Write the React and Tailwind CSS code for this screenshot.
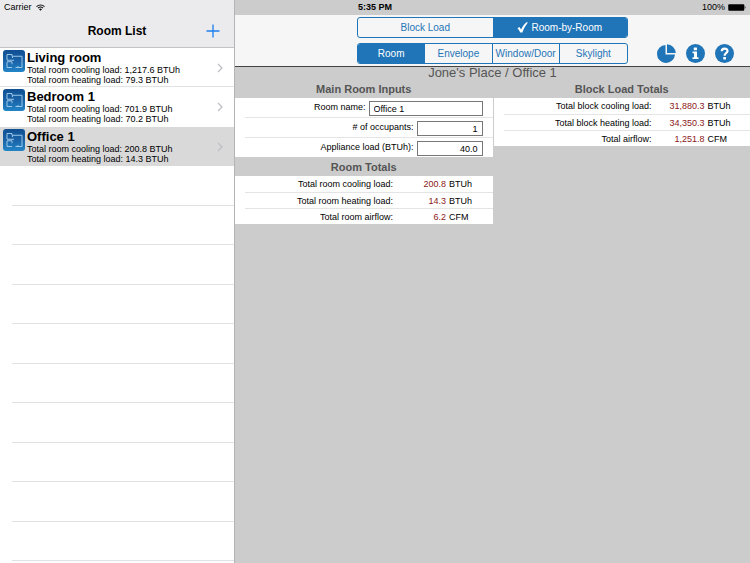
import { useState } from "react";

const rooms = [
  { name: "Living room", cooling: "1,217.6", heating: "79.3" },
  { name: "Bedroom 1", cooling: "701.9", heating: "70.2" },
  { name: "Office 1", cooling: "200.8", heating: "14.3" },
];

const roomTotals = [
  { label: "Total room cooling load:", value: "200.8", unit: "BTUh" },
  { label: "Total room heating load:", value: "14.3", unit: "BTUh" },
  { label: "Total room airflow:", value: "6.2", unit: "CFM" },
];

const blockTotals = [
  { label: "Total block cooling load:", value: "31,880.3", unit: "BTUh" },
  { label: "Total block heating load:", value: "34,350.3", unit: "BTUh" },
  { label: "Total airflow:", value: "1,251.8", unit: "CFM" },
];

const tabs = ["Room", "Envelope", "Window/Door", "Skylight"];

function WifiIcon() {
  return (
    <svg viewBox="0 0 18 14" className="w-[9px] h-[7px]" fill="none" stroke="#111" strokeWidth="2.2">
      <path d="M1 5.2a11.5 11.5 0 0 1 16 0" />
      <path d="M4 8.4a7.2 7.2 0 0 1 10 0" />
      <path d="M9 13.6 6 10.6a4.3 4.3 0 0 1 6 0z" fill="#111" stroke="none" />
    </svg>
  );
}

function BatteryIcon() {
  return (
    <svg viewBox="0 0 36 14" className="w-[18px] h-[7px]">
      <rect x="0.5" y="0.5" width="32" height="13" rx="2" fill="#000" />
      <path d="M33.5 4.5c2 .4 2 4.6 0 5z" fill="#000" />
    </svg>
  );
}

function PieIcon() {
  return (
    <svg viewBox="0 0 38 38" className="size-[19px]" fill="#1f75b8">
      <path d="M17 2v19H36A18 18 0 1 1 17 2z" />
      <path d="M20 0.5A18 18 0 0 1 37.5 18H20z" />
    </svg>
  );
}

function InfoIcon() {
  return (
    <svg viewBox="0 0 38 38" className="size-[19px]" fill="#fff">
      <circle cx="19" cy="19" r="19" fill="#1f75b8" />
      <rect x="15.5" y="7" width="6.500" height="5.500" rx="1" />
      <path d="M13 15h9v11.500h3V30H13v-3.500h3V18.500h-3z" />
    </svg>
  );
}

function HelpIcon() {
  return (
    <svg viewBox="0 0 38 38" className="size-[19px]">
      <circle cx="19" cy="19" r="19" fill="#1f75b8" />
      <path d="M13.500 14.500c0-7 11.500-7 11.500-.5 0 4.500-5.800 4.500-5.800 9.500" fill="none" stroke="#fff" strokeWidth="4.500" />
      <rect x="16.500" y="26" width="5.500" height="5" rx="1" fill="#fff" />
    </svg>
  );
}

function CheckIcon() {
  return (
    <svg viewBox="0 0 24 24" className="size-[11px]" fill="currentColor">
      <path d="M1 13.500 5.300 10.800 9 16.200C12 9.500 16 4 21.500 0L23.500 1.500C18.500 7.500 14.500 14.500 11.800 23H7.200C5.500 19.500 3.500 16.200 1 13.500z" />
    </svg>
  );
}

function BlueprintIcon() {
  return (
    <svg viewBox="0 0 44 44" className="size-[22px] shrink-0">
      <defs>
        <linearGradient id="plan" x1="0" y1="0" x2="0" y2="1">
          <stop offset="0" stopColor="#0f4f92" />
          <stop offset="0.5" stopColor="#1a62a8" />
          <stop offset="1" stopColor="#2385c6" />
        </linearGradient>
      </defs>
      <rect width="44" height="44" rx="6" fill="url(#plan)" />
      <g fill="none" stroke="#a9d2ee" strokeWidth="1.8">
        <path d="M8 20V9h10v3.500h20V35H25M18 35H8V24" />
        <path d="M8 20.500h14M19 13v3M8 23.500h10v5M30 35v-3" />
      </g>
    </svg>
  );
}

function TotalsTable({ rows }) {
  return (
    <div className="bg-white pl-[10px]">
      <table className="w-full border-collapse text-[9px] leading-[14px]">
        <tbody className="divide-y divide-[#e4e4e4]">
          {rows.map(({ label, value, unit }) => (
            <tr key={label} className="h-4">
              <th scope="row" className="w-[148px] p-0 pt-px font-normal text-right">{label}</th>
              <td className="w-[53px] p-0 pt-px text-right text-[#8c1820]">{value}</td>
              <td className="p-0 pt-px pl-[3px]">{unit}</td>
            </tr>
          ))}
        </tbody>
      </table>
    </div>
  );
}

function SectionTitle({ children }) {
  return <h2 className="h-[19px] pt-px text-center text-[11px] leading-[18px] font-bold text-[#555]">{children}</h2>;
}

function InputRow({ id, label, value, onChange, wide }) {
  return (
    <div className="h-5 last:h-[19px] pt-px flex items-center justify-end gap-[3px] pr-[10px] border-b border-[#e4e4e4] last:border-b-0">
      <label htmlFor={id} className="text-[9px]">{label}</label>
      <input
        id={id}
        value={value}
        onChange={(e) => onChange(e.target.value)}
        className={`h-[15px] border border-[#777] bg-white px-1 pt-px text-[9px] outline-none ${
          wide ? "w-[114px]" : "w-[66px] text-right"
        }`}
      />
    </div>
  );
}

export default function App() {
  const [selected, setSelected] = useState(2);
  const [mode, setMode] = useState("room");
  const [tab, setTab] = useState("Room");
  const [name, setName] = useState("Office 1");
  const [occupants, setOccupants] = useState("1");
  const [appliance, setAppliance] = useState("40.0");

  return (
    <div className="h-screen flex flex-col overflow-hidden bg-[#ccc] text-black font-['Liberation_Sans',Arial,sans-serif]">

      {/* STATUS BAR */}
      <div className="h-[15px] shrink-0 grid grid-cols-3 items-center px-1 text-[9px] bg-[linear-gradient(to_right,#ebebed_234px,#b4b4b6_234px,#b4b4b6_235px,#ccc_235px)]">
        <div className="flex items-center gap-1">Carrier <WifiIcon /></div>
        <div className="text-center font-bold">5:35 PM</div>
        <div className="flex items-center justify-end gap-[3px]">100% <BatteryIcon /></div>
      </div>

      <div className="flex flex-1 min-h-0">

        {/* ROOM LIST */}
        <aside className="w-[235px] shrink-0 flex flex-col overflow-hidden bg-white border-r border-[#b4b4b6]">
          <header className="h-[33px] shrink-0 grid grid-cols-[1fr_auto_1fr] items-center bg-[#ebebed] border-b border-[#c4c4c6]">
            <h1 className="col-start-2 text-[12px] font-bold">Room List</h1>
            <button aria-label="Add room" className="justify-self-end pr-[14px]">
              <svg viewBox="0 0 14 14" className="size-[14px]" stroke="#1c7ff0" strokeWidth="1.300">
                <path d="M7 0.500v13M0.500 7h13" />
              </svg>
            </button>
          </header>
          <ul>
            {rooms.map((room, i) => (
              <li key={room.name} className={`h-[39px] even:h-10 ${i === selected ? "bg-[#d9d9d9]" : i === 0 ? "bg-[linear-gradient(to_top,#e2e2e4_1px,transparent_1px)]" : ""}`}>
                <button onClick={() => setSelected(i)} className="w-full h-full flex items-start pl-[3px] text-left">
                  <span className="pt-[2px]"><BlueprintIcon /></span>
                  <span className="flex-1 pl-[2px] pt-[2px] flex flex-col text-[9px] leading-[10px]">
                    <span className="text-[13px] leading-[15px] font-bold">{room.name}</span>
                    <span>Total room cooling load: {room.cooling} BTUh</span>
                    <span>Total room heating load: {room.heating} BTUh</span>
                  </span>
                  <svg viewBox="0 0 6 10" className="w-[6px] h-[10px] self-center mr-[11px]" fill="none" stroke="#c0c0c4" strokeWidth="1.300">
                    <path d="M1 1l4 4-4 4" />
                  </svg>
                </button>
              </li>
            ))}
            {Array.from({ length: 12 }, (_, i) => (
              <li key={i} aria-hidden="true" className="h-[39px] even:h-10 ml-3 border-b border-[#e2e2e4]" />
            ))}
          </ul>
        </aside>

        {/* ROOM DETAILS */}
        <main className="flex-1 min-w-0">
          <div className="h-[52px] grid grid-cols-[1fr_271px_1fr] bg-[#f6f6f6] border-b border-[#444] text-[10px] text-[#1f75b8]">
            <div className="col-start-2 pt-[2px] flex flex-col gap-[5px]">
              <div className="h-[21px] grid grid-cols-2 rounded-[3px] border border-[#1f75b8] overflow-hidden">
                <button onClick={() => setMode("block")} className={mode === "block" ? "bg-[#1f75b8] text-white" : ""}>
                  Block Load
                </button>
                <button
                  onClick={() => setMode("room")}
                  className={`flex items-center justify-center gap-[3px] ${mode === "room" ? "bg-[#1f75b8] text-white" : ""}`}
                >
                  <CheckIcon /> Room-by-Room
                </button>
              </div>
              <div className="h-[21px] grid grid-cols-4 rounded-[3px] border border-[#1f75b8] divide-x divide-[#1f75b8] overflow-hidden">
                {tabs.map((t) => (
                  <button key={t} onClick={() => setTab(t)} className={tab === t ? "bg-[#1f75b8] text-white" : ""}>
                    {t}
                  </button>
                ))}
              </div>
            </div>
            <div className="flex items-end justify-end gap-[10px] pr-4 pb-[3px]">
              <button aria-label="Charts"><PieIcon /></button>
              <button aria-label="Info"><InfoIcon /></button>
              <button aria-label="Help"><HelpIcon /></button>
            </div>
          </div>

          <div className="h-3 text-center text-[13px] leading-3 text-[#555]">Jone's Place / Office 1</div>

          <div className="grid grid-cols-2 items-start">
            <div>
              <SectionTitle>Main Room Inputs</SectionTitle>
              <form className="bg-white pl-[10px]" onSubmit={(e) => e.preventDefault()}>
                <InputRow id="name" label="Room name:" value={name} onChange={setName} wide />
                <InputRow id="occupants" label="# of occupants:" value={occupants} onChange={setOccupants} />
                <InputRow id="appliance" label="Appliance load (BTUh):" value={appliance} onChange={setAppliance} />
              </form>
              <SectionTitle>Room Totals</SectionTitle>
              <TotalsTable rows={roomTotals} />
            </div>
            <div className="border-l border-[#ccc]">
              <SectionTitle>Block Load Totals</SectionTitle>
              <TotalsTable rows={blockTotals} />
            </div>
          </div>
        </main>

      </div>
    </div>
  );
}
